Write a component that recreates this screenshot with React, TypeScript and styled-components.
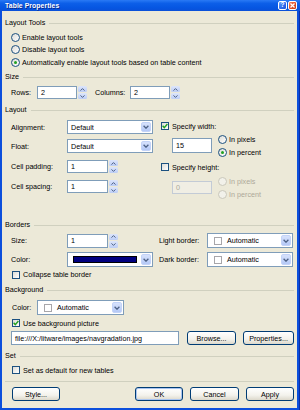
import React from "react";
import styled, { createGlobalStyle } from "styled-components";

const GlobalStyle = createGlobalStyle`
  html, body {
    margin: 0;
    padding: 0;
    background: #fff;
  }
  body {
    font-family: "Liberation Sans", Arial, sans-serif;
    font-size: 7.2px;
    color: #000;
  }
  * {
    box-sizing: border-box;
  }
`;

const Window = styled.div`
  width: 300px;
  height: 410px;
  display: flex;
  flex-direction: column;
  background: #0c4fdc;
  overflow: hidden;
`;

const TitleBar = styled.div`
  height: 11px;
  flex: none;
  display: flex;
  align-items: center;
  justify-content: space-between;
  padding: 0 3px 0 5px;
  background: linear-gradient(
    to bottom,
    #2a7af5 0%,
    #0c5fe8 30%,
    #0656e2 70%,
    #0a50d8 100%
  );
`;

const TitleText = styled.span`
  font-size: 6.8px;
  font-weight: bold;
  color: #fff;
  text-shadow: 1px 1px 0 #0a2a8a;
  letter-spacing: 0.1px;
`;

const CaptionButtons = styled.div`
  display: flex;
  gap: 1px;
`;

const CapBtn = styled.div<{ $close?: boolean }>`
  width: 9px;
  height: 9px;
  border: 1px solid #fff;
  border-radius: 2px;
  display: grid;
  place-items: center;
  color: #fff;
  font-weight: bold;
  font-size: 6.5px;
  line-height: 1;
  background: ${(p) =>
    p.$close
      ? "linear-gradient(135deg, #f08a6a, #e0502a 50%, #c73d14)"
      : "linear-gradient(135deg, #6aa0f8, #2f6ef0 50%, #1c56dc)"};
`;

const Frame = styled.div`
  flex: 1;
  display: flex;
  padding: 0 4px 2px 2px;
  border-right: 1px solid #0a2fa8;
`;

const Body = styled.div`
  flex: 1;
  background: #ece9d8;
  padding: 7px 3px 0 3px;
  display: flex;
  flex-direction: column;
`;

const GroupHeader = styled.div<{ $mt?: number }>`
  display: flex;
  align-items: center;
  gap: 4px;
  height: 10px;
  flex: none;
  margin-top: ${(p) => p.$mt ?? 0}px;
  line-height: 10px;

  &::after {
    content: "";
    flex: 1;
    height: 1px;
    background: #d0d0bf;
  }
`;

const Indent = styled.div<{ $mt?: number }>`
  padding-left: 6px;
  margin-top: ${(p) => p.$mt ?? 0}px;
  display: flex;
  flex-direction: column;
`;

const OptionRow = styled.div<{ $h?: number; $mt?: number; $disabled?: boolean; $ml?: number }>`
  display: flex;
  align-items: center;
  gap: 2px;
  height: ${(p) => p.$h ?? 10}px;
  margin-top: ${(p) => p.$mt ?? 0}px;
  margin-left: ${(p) => p.$ml ?? 0}px;
  white-space: nowrap;
  color: ${(p) => (p.$disabled ? "#aca899" : "#000")};
`;

const RadioMark = styled.span<{ $on?: boolean; $disabled?: boolean }>`
  width: 9px;
  height: 9px;
  flex: none;
  border-radius: 50%;
  border: 1px solid ${(p) => (p.$disabled ? "#cac8bb" : "#1c5180")};
  background: ${(p) =>
    p.$disabled ? "#f2f1ea" : "linear-gradient(135deg, #dcdcd7, #fff)"};
  display: grid;
  place-items: center;

  &::after {
    content: "";
    display: ${(p) => (p.$on ? "block" : "none")};
    width: 3px;
    height: 3px;
    border-radius: 50%;
    background: #21a121;
  }
`;

const CheckBox = styled.span`
  width: 8px;
  height: 8px;
  flex: none;
  border: 1px solid #1c5180;
  background: linear-gradient(135deg, #dcdcd7, #fff);
  display: grid;
  place-items: center;
  margin-right: 1px;
`;

const Row = styled.div<{ $h?: number; $mt?: number }>`
  display: flex;
  align-items: center;
  height: ${(p) => p.$h ?? 14}px;
  margin-top: ${(p) => p.$mt ?? 0}px;
  white-space: nowrap;
`;

const Label = styled.span<{ $w: number; $ml?: number }>`
  width: ${(p) => p.$w}px;
  margin-left: ${(p) => p.$ml ?? 0}px;
  flex: none;
`;

const TextBox = styled.div<{ $w: number; $h?: number; $disabled?: boolean }>`
  width: ${(p) => p.$w}px;
  height: ${(p) => p.$h ?? 14}px;
  flex: none;
  border: 1px solid ${(p) => (p.$disabled ? "#c3cbd6" : "#7f9db9")};
  background: ${(p) => (p.$disabled ? "#f0eee4" : "#fff")};
  color: ${(p) => (p.$disabled ? "#aca899" : "#000")};
  padding-left: 3px;
  display: flex;
  align-items: center;
  overflow: hidden;
`;

const SpinBox = styled.div<{ $h: number }>`
  width: 9px;
  height: ${(p) => p.$h}px;
  margin-left: 1px;
  flex: none;
  display: flex;
  flex-direction: column;
  gap: 1px;
`;

const SpinHalf = styled.div`
  flex: 1;
  border-radius: 1.5px;
  background: linear-gradient(to bottom, #dde6fb, #bccdf6);
  display: grid;
  place-items: center;
`;

const SelectBox = styled.div<{ $w: number; $h?: number }>`
  width: ${(p) => p.$w}px;
  height: ${(p) => p.$h ?? 14}px;
  flex: none;
  border: 1px solid #7f9db9;
  background: #fff;
  display: flex;
  align-items: center;
  padding: 1px 1px 1px 3px;
`;

const SelectValue = styled.div`
  flex: 1;
  display: flex;
  align-items: center;
  gap: 5px;
  overflow: hidden;
`;

const ArrowBox = styled.div`
  width: 10px;
  height: 100%;
  flex: none;
  border-radius: 2px;
  background: linear-gradient(to bottom, #d7e2fc, #b4c8f6);
  border: 1px solid #c3d3f8;
  display: grid;
  place-items: center;
`;

const Swatch = styled.span<{ $color?: string; $wide?: boolean }>`
  width: ${(p) => (p.$wide ? "64px" : "8px")};
  height: ${(p) => (p.$wide ? "7px" : "8px")};
  flex: none;
  margin-left: ${(p) => (p.$wide ? "2px" : "3px")};
  background: ${(p) => p.$color ?? "#fff"};
  border: 1px solid ${(p) => (p.$wide ? "#000" : "#a7a6aa")};
`;

const TwoCol = styled.div<{ $mt?: number }>`
  display: grid;
  grid-template-columns: 142px 1fr;
  column-gap: 6px;
  padding-left: 6px;
  margin-top: ${(p) => p.$mt ?? 0}px;
`;

const Col = styled.div<{ $pt?: number; $pl?: number }>`
  display: flex;
  flex-direction: column;
  padding-top: ${(p) => p.$pt ?? 0}px;
  padding-left: ${(p) => p.$pl ?? 0}px;
`;

const UnitBlock = styled.div<{ $mt?: number }>`
  display: flex;
  align-items: center;
  height: 26px;
  margin-top: ${(p) => p.$mt ?? 0}px;
  padding-left: 11px;
  gap: 6px;
`;

const UnitList = styled.div`
  display: flex;
  flex-direction: column;
`;

const Button = styled.button<{ $w: number; $default?: boolean }>`
  width: ${(p) => p.$w}px;
  height: 14px;
  flex: none;
  padding: 0;
  font-family: inherit;
  font-size: 7.2px;
  color: #000;
  border: 1px solid #003c74;
  border-radius: 3px;
  background: linear-gradient(to bottom, #fff, #f3f2ec 60%, #dcd8cb);
  box-shadow: ${(p) => (p.$default ? "inset 0 0 0 1px #a9c4f0" : "none")};
`;

const FileRow = styled.div<{ $mt?: number }>`
  display: flex;
  align-items: center;
  gap: 7px;
  height: 14px;
  margin-top: ${(p) => p.$mt ?? 0}px;
`;

const Separator = styled.div<{ $mt?: number }>`
  height: 1px;
  flex: none;
  background: #d0d0bf;
  margin-top: ${(p) => p.$mt ?? 0}px;
`;

const ButtonBar = styled.div<{ $mt?: number }>`
  display: flex;
  align-items: center;
  padding-left: 7px;
  margin-top: ${(p) => p.$mt ?? 0}px;
`;

const ButtonGroup = styled.div`
  margin-left: auto;
  display: flex;
  gap: 7px;
`;

function Check({ on }: { on?: boolean }) {
  return (
    <CheckBox>
      {on && (
        <svg width="6" height="6" viewBox="0 0 6 6">
          <path
            d="M0.6 2.8 L2.3 4.6 L5.4 1"
            fill="none"
            stroke="#21a121"
            strokeWidth="1.4"
          />
        </svg>
      )}
    </CheckBox>
  );
}

function Spin({ h = 14 }: { h?: number }) {
  return (
    <SpinBox $h={h}>
      <SpinHalf>
        <svg width="5" height="3" viewBox="0 0 5 3">
          <path d="M0.5 2.6 L2.5 0.6 L4.5 2.6" fill="none" stroke="#4d6185" />
        </svg>
      </SpinHalf>
      <SpinHalf>
        <svg width="5" height="3" viewBox="0 0 5 3">
          <path d="M0.5 0.4 L2.5 2.4 L4.5 0.4" fill="none" stroke="#4d6185" />
        </svg>
      </SpinHalf>
    </SpinBox>
  );
}

function Select({
  w,
  h,
  children,
}: {
  w: number;
  h?: number;
  children: React.ReactNode;
}) {
  return (
    <SelectBox $w={w} $h={h}>
      <SelectValue>{children}</SelectValue>
      <ArrowBox>
        <svg width="6" height="4" viewBox="0 0 6 4">
          <path
            d="M0.6 0.8 L3 3.2 L5.4 0.8"
            fill="none"
            stroke="#4d6185"
            strokeWidth="1.3"
          />
        </svg>
      </ArrowBox>
    </SelectBox>
  );
}

export default function App() {
  return (
    <>
      <GlobalStyle />
      <Window>
        <TitleBar>
          <TitleText>Table Properties</TitleText>
          <CaptionButtons>
            <CapBtn>?</CapBtn>
            <CapBtn $close>
              <svg width="5" height="5" viewBox="0 0 5 5">
                <path d="M0.5 0.5 L4.5 4.5 M4.5 0.5 L0.5 4.5" stroke="#fff" strokeWidth="1.3" />
              </svg>
            </CapBtn>
          </CaptionButtons>
        </TitleBar>
        <Frame>
          <Body>
            <GroupHeader>Layout Tools</GroupHeader>
            <Indent $mt={3}>
              <OptionRow $h={12.5}>
                <RadioMark />
                Enable layout tools
              </OptionRow>
              <OptionRow $h={12.5}>
                <RadioMark />
                Disable layout tools
              </OptionRow>
              <OptionRow $h={12.5}>
                <RadioMark $on />
                Automatically enable layout tools based on table content
              </OptionRow>
            </Indent>

            <GroupHeader $mt={3.5}>Size</GroupHeader>
            <Indent $mt={4}>
              <Row $h={13}>
                <Label $w={26}>Rows:</Label>
                <TextBox $w={40} $h={13}>2</TextBox>
                <Spin h={13} />
                <Label $w={35} $ml={8}>Columns:</Label>
                <TextBox $w={40} $h={13}>2</TextBox>
                <Spin h={13} />
              </Row>
            </Indent>

            <GroupHeader $mt={6}>Layout</GroupHeader>
            <TwoCol>
              <Col $pt={5}>
                <Row>
                  <Label $w={56}>Alignment:</Label>
                  <Select w={86}>Default</Select>
                </Row>
                <Row $mt={5}>
                  <Label $w={56}>Float:</Label>
                  <Select w={86}>Default</Select>
                </Row>
                <Row $mt={7} $h={13}>
                  <Label $w={56}>Cell padding:</Label>
                  <TextBox $w={41} $h={13}>1</TextBox>
                  <Spin h={13} />
                </Row>
                <Row $mt={7} $h={13}>
                  <Label $w={56}>Cell spacing:</Label>
                  <TextBox $w={41} $h={13}>1</TextBox>
                  <Spin h={13} />
                </Row>
              </Col>
              <Col $pt={6} $pl={2}>
                <OptionRow>
                  <Check on />
                  Specify width:
                </OptionRow>
                <UnitBlock $mt={1.5}>
                  <TextBox $w={40} $h={15}>15</TextBox>
                  <UnitList>
                    <OptionRow $h={13}>
                      <RadioMark />
                      In pixels
                    </OptionRow>
                    <OptionRow $h={13}>
                      <RadioMark $on />
                      In percent
                    </OptionRow>
                  </UnitList>
                </UnitBlock>
                <OptionRow $mt={3.5}>
                  <Check />
                  Specify height:
                </OptionRow>
                <UnitBlock $mt={2.5}>
                  <TextBox $w={40} $h={13} $disabled>
                    0
                  </TextBox>
                  <UnitList>
                    <OptionRow $h={13} $disabled>
                      <RadioMark $disabled />
                      In pixels
                    </OptionRow>
                    <OptionRow $h={13} $disabled>
                      <RadioMark $disabled />
                      In percent
                    </OptionRow>
                  </UnitList>
                </UnitBlock>
              </Col>
            </TwoCol>

            <GroupHeader $mt={19.5}>Borders</GroupHeader>
            <TwoCol $mt={3}>
              <Col>
                <Row $h={15}>
                  <Label $w={56}>Size:</Label>
                  <TextBox $w={41}>1</TextBox>
                  <Spin h={14} />
                </Row>
                <Row $h={15} $mt={4}>
                  <Label $w={56}>Color:</Label>
                  <Select w={86} h={15}>
                    <Swatch $wide $color="#000080" />
                  </Select>
                </Row>
              </Col>
              <Col>
                <Row $h={15}>
                  <Label $w={48}>Light border:</Label>
                  <Select w={86} h={15}>
                    <Swatch />
                    Automatic
                  </Select>
                </Row>
                <Row $h={15} $mt={4}>
                  <Label $w={48}>Dark border:</Label>
                  <Select w={86} h={15}>
                    <Swatch />
                    Automatic
                  </Select>
                </Row>
              </Col>
            </TwoCol>
            <Indent $mt={2.5}>
              <OptionRow $ml={1}>
                <Check />
                Collapse table border
              </OptionRow>
            </Indent>

            <GroupHeader $mt={5.5}>Background</GroupHeader>
            <Indent $mt={5}>
              <Row $h={15}>
                <Label $w={25} $ml={1}>Color:</Label>
                <Select w={87} h={15}>
                  <Swatch />
                  Automatic
                </Select>
              </Row>
              <OptionRow $mt={3} $ml={1}>
                <Check on />
                Use background picture
              </OptionRow>
              <FileRow $mt={3}>
                <TextBox $w={168}>file:///X:/litware/images/navgradation.jpg</TextBox>
                <Button $w={49} style={{ marginLeft: 1 }}>
                  Browse...
                </Button>
                <Button $w={51}>Properties...</Button>
              </FileRow>
            </Indent>

            <GroupHeader $mt={6}>Set</GroupHeader>
            <Indent $mt={4}>
              <OptionRow $ml={1}>
                <Check />
                Set as default for new tables
              </OptionRow>
            </Indent>

            <Separator $mt={5.5} />
            <ButtonBar $mt={5.5}>
              <Button $w={48}>Style...</Button>
              <ButtonGroup>
                <Button $w={48} $default>
                  OK
                </Button>
                <Button $w={49}>Cancel</Button>
                <Button $w={48}>Apply</Button>
              </ButtonGroup>
            </ButtonBar>
          </Body>
        </Frame>
      </Window>
    </>
  );
}
